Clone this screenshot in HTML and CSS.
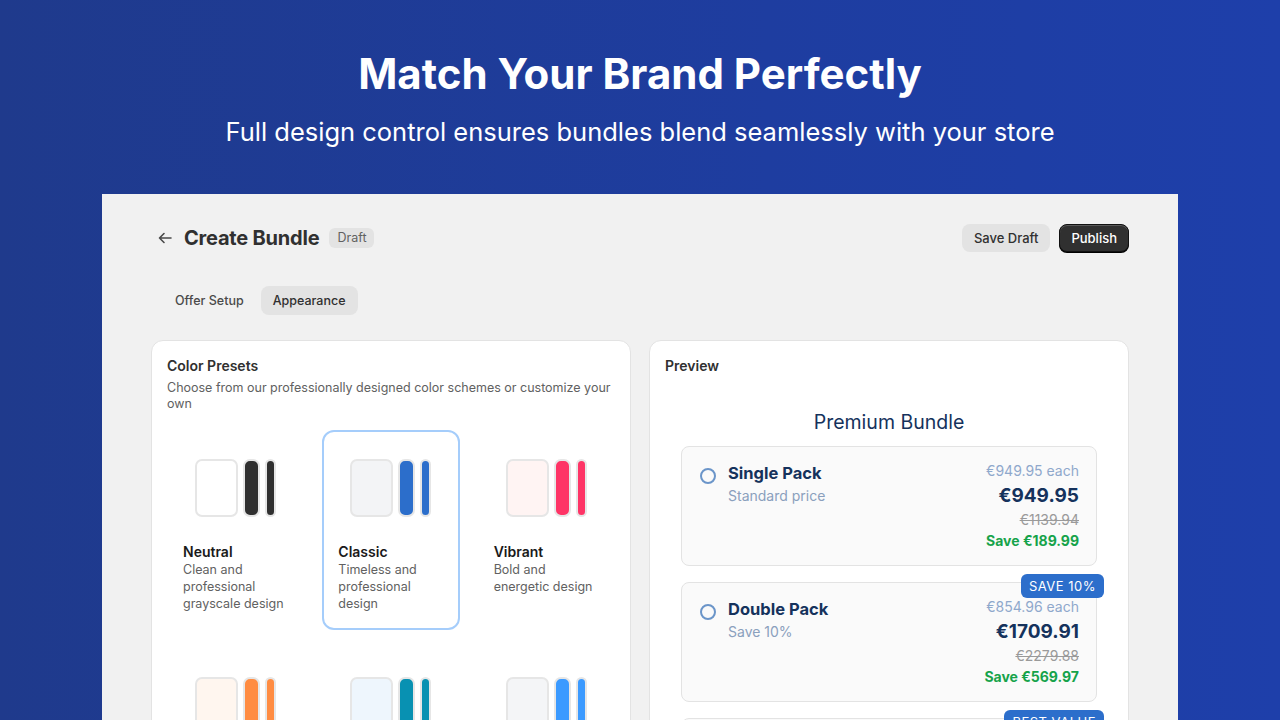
FILE: index.html
```html
<!DOCTYPE html>
<html>
<head>
    <title>Match Your Brand Perfectly</title>
    <link rel="stylesheet" href="styles.css">
</head>
<body>
    <header class="hero">
        <h1>Match Your Brand Perfectly</h1>
        <p>Full design control ensures bundles blend seamlessly with your store</p>
    </header>

    <main class="frame">
        <div class="topbar">
            <div class="title-group">
                <svg class="back" width="16" height="16" viewBox="0 0 16 16" fill="none" stroke="#4a4a4a" stroke-width="1.6" stroke-linecap="round" stroke-linejoin="round">
                    <path d="M14 8H2.5M7 3.5L2.5 8L7 12.5"/>
                </svg>
                <h2>Create Bundle</h2>
                <span class="badge">Draft</span>
            </div>
            <div class="actions">
                <button class="btn">Save Draft</button>
                <button class="btn btn-dark">Publish</button>
            </div>
        </div>

        <nav class="tabs">
            <span class="tab">Offer Setup</span>
            <span class="tab active">Appearance</span>
        </nav>

        <div class="columns">
            <section class="card">
                <h3>Color Presets</h3>
                <p class="card-desc">Choose from our professionally designed color schemes or customize your own</p>

                <div class="presets">
                    <div class="preset">
                        <div class="swatches">
                            <span class="sw-main" style="background:#ffffff"></span>
                            <span class="sw-bar" style="background:#303030"></span>
                            <span class="sw-thin" style="background:#303030"></span>
                        </div>
                        <div class="preset-name">Neutral</div>
                        <div class="preset-desc">Clean and professional grayscale design</div>
                    </div>
                    <div class="preset selected">
                        <div class="swatches">
                            <span class="sw-main" style="background:#f3f4f6"></span>
                            <span class="sw-bar" style="background:#2c6ecb"></span>
                            <span class="sw-thin" style="background:#2c6ecb"></span>
                        </div>
                        <div class="preset-name">Classic</div>
                        <div class="preset-desc">Timeless and professional design</div>
                    </div>
                    <div class="preset">
                        <div class="swatches">
                            <span class="sw-main" style="background:#fff4f3"></span>
                            <span class="sw-bar" style="background:#fe3466"></span>
                            <span class="sw-thin" style="background:#fe3466"></span>
                        </div>
                        <div class="preset-name">Vibrant</div>
                        <div class="preset-desc">Bold and energetic design</div>
                    </div>
                    <div class="preset">
                        <div class="swatches">
                            <span class="sw-main" style="background:#fff6ef"></span>
                            <span class="sw-bar" style="background:#ff8c42"></span>
                            <span class="sw-thin" style="background:#ff8c42"></span>
                        </div>
                        <div class="preset-name">Warm</div>
                        <div class="preset-desc">Friendly and inviting design</div>
                    </div>
                    <div class="preset">
                        <div class="swatches">
                            <span class="sw-main" style="background:#eef6fd"></span>
                            <span class="sw-bar" style="background:#0891b2"></span>
                            <span class="sw-thin" style="background:#0891b2"></span>
                        </div>
                        <div class="preset-name">Ocean</div>
                        <div class="preset-desc">Calm and refreshing design</div>
                    </div>
                    <div class="preset">
                        <div class="swatches">
                            <span class="sw-main" style="background:#f4f5f7"></span>
                            <span class="sw-bar" style="background:#3b9aff"></span>
                            <span class="sw-thin" style="background:#3b9aff"></span>
                        </div>
                        <div class="preset-name">Modern</div>
                        <div class="preset-desc">Clean and modern design</div>
                    </div>
                </div>
            </section>

            <section class="card">
                <h3>Preview</h3>
                <div class="preview-body">
                    <div class="bundle-title">Premium Bundle</div>

                    <div class="option">
                        <div class="option-left">
                            <span class="radio"></span>
                            <div>
                                <div class="option-name">Single Pack</div>
                                <div class="option-sub">Standard price</div>
                            </div>
                        </div>
                        <div class="option-prices">
                            <div class="each">€949.95 each</div>
                            <div class="price">€949.95</div>
                            <div class="old">€1139.94</div>
                            <div class="save">Save €189.99</div>
                        </div>
                    </div>

                    <div class="option">
                        <span class="tag">SAVE 10%</span>
                        <div class="option-left">
                            <span class="radio"></span>
                            <div>
                                <div class="option-name">Double Pack</div>
                                <div class="option-sub">Save 10%</div>
                            </div>
                        </div>
                        <div class="option-prices">
                            <div class="each">€854.96 each</div>
                            <div class="price">€1709.91</div>
                            <div class="old">€2279.88</div>
                            <div class="save">Save €569.97</div>
                        </div>
                    </div>

                    <div class="option">
                        <span class="tag">BEST VALUE</span>
                        <div class="option-left">
                            <span class="radio"></span>
                            <div>
                                <div class="option-name">Triple Pack</div>
                                <div class="option-sub">Save 15%</div>
                            </div>
                        </div>
                        <div class="option-prices">
                            <div class="each">€807.46 each</div>
                            <div class="price">€2422.37</div>
                            <div class="old">€3419.82</div>
                            <div class="save">Save €997.45</div>
                        </div>
                    </div>
                </div>
            </section>
        </div>
    </main>
</body>
</html>
```

FILE: styles.css
```css
body {
    margin: 0;
    height: 720px;
    overflow: hidden;
    font-family: Inter, "Noto Sans", sans-serif;
    background: linear-gradient(90deg, #1f3a8c 0%, #1e3da0 60%, #1e3faa 100%);
}

.hero {
    text-align: center;
    color: #fff;
    padding-top: 49px;
}

.hero h1 {
    margin: 0;
    font-size: 42px;
    line-height: 50px;
    font-weight: 700;
}

.hero p {
    margin: 18px 0 0;
    font-size: 25.5px;
    line-height: 30px;
}

.frame {
    width: 1076px;
    margin: 47px auto 0;
    box-sizing: border-box;
    padding: 30px 49px;
    background-color: #f1f1f1;
    min-height: 600px;
}

.topbar {
    display: flex;
    justify-content: space-between;
    align-items: center;
    height: 28px;
}

.title-group {
    display: flex;
    align-items: center;
}

.back {
    margin-left: 6px;
    margin-right: 11px;
}

.title-group h2 {
    margin: 0;
    font-size: 20px;
    font-weight: 700;
    color: #303030;
    letter-spacing: -0.2px;
}

.badge {
    margin-left: 10px;
    background-color: #e3e3e3;
    color: #616161;
    font-size: 12.5px;
    line-height: 20px;
    padding: 0 8px;
    border-radius: 6px;
}

.actions {
    display: flex;
    gap: 9px;
}

.btn {
    font-family: inherit;
    height: 28px;
    padding: 0 12px;
    border: none;
    border-radius: 8px;
    font-size: 13px;
    font-weight: 500;
    color: #303030;
    background-color: #e3e3e3;
}

.btn-dark {
    background-color: #303030;
    color: #fff;
    border: 1px solid #111;
    padding: 0 11px;
    box-shadow: inset 0 1px 0 rgba(255, 255, 255, 0.2), 0 1px 0 #000;
}

.tabs {
    display: flex;
    gap: 5px;
    margin: 34px 0 0 12px;
}

.tab {
    font-size: 12.5px;
    font-weight: 500;
    color: #4a4a4a;
    line-height: 29px;
    padding: 0 12px;
    border-radius: 8px;
}

.tab.active {
    background-color: #e3e3e3;
    color: #303030;
}

.columns {
    display: grid;
    grid-template-columns: 1fr 1fr;
    gap: 18px;
    margin-top: 25px;
}

.card {
    background-color: #fff;
    border: 1px solid #e3e3e3;
    border-radius: 12px;
    padding: 15px 15px;
    height: 420px;
}

.card h3 {
    margin: 0;
    font-size: 14px;
    line-height: 20px;
    font-weight: 600;
    color: #303030;
}

.card-desc {
    margin: 4px 0 0;
    font-size: 12.5px;
    line-height: 16px;
    color: #616161;
}

.presets {
    display: grid;
    grid-template-columns: repeat(3, 1fr);
    gap: 18px;
    margin-top: 18px;
}

.preset {
    border: 2px solid transparent;
    border-radius: 12px;
    padding: 27px 14px 16px;
}

.preset.selected {
    border-color: #a5cdfb;
}

.swatches {
    display: flex;
    justify-content: center;
    gap: 5px;
    height: 58px;
    margin-bottom: 26px;
}

.swatches span {
    box-sizing: border-box;
    border: 2px solid #e6e6e6;
    height: 58px;
}

.sw-main {
    width: 43px;
    border-radius: 7px;
}

.sw-bar {
    width: 17px;
    border-radius: 7px;
}

.sw-thin {
    width: 11px;
    border-radius: 6px;
}

.preset-name {
    font-size: 14px;
    line-height: 18px;
    font-weight: 600;
    color: #1a1a1a;
}

.preset-desc {
    font-size: 12.5px;
    line-height: 17px;
    color: #616161;
}

.preview-body {
    padding: 32px 16px 0;
}

.bundle-title {
    text-align: center;
    font-size: 19.5px;
    line-height: 28px;
    color: #15325c;
    margin-bottom: 10px;
}

.option {
    position: relative;
    display: flex;
    justify-content: space-between;
    background-color: #fafafa;
    border: 1px solid #e3e3e3;
    border-radius: 8px;
    padding: 14px 17px 13px 18px;
    margin-bottom: 16px;
}

.option-left {
    display: flex;
    gap: 12px;
    align-items: flex-start;
}

.radio {
    width: 16px;
    height: 16px;
    box-sizing: border-box;
    border: 2px solid #6b95c9;
    border-radius: 50%;
    margin-top: 7px;
}

.option-name {
    font-size: 16.5px;
    line-height: 24px;
    font-weight: 700;
    color: #15325c;
}

.option-sub {
    font-size: 14px;
    line-height: 22px;
    color: #8aa0bd;
}

.option-prices {
    text-align: right;
    font-size: 14px;
    line-height: 22px;
    margin-top: -1px;
}

.each {
    color: #8fa8cc;
}

.price {
    font-size: 19px;
    line-height: 28px;
    font-weight: 700;
    color: #15325c;
}

.old {
    color: #9a9a9a;
    line-height: 20px;
    text-decoration: line-through;
}

.save {
    color: #16a34a;
    font-weight: 700;
}

.tag {
    position: absolute;
    top: -9px;
    right: -8px;
    background-color: #2c6ecb;
    color: #fff;
    font-size: 13px;
    line-height: 24px;
    letter-spacing: 0.5px;
    padding: 0 8px;
    border-radius: 6px;
}
```
